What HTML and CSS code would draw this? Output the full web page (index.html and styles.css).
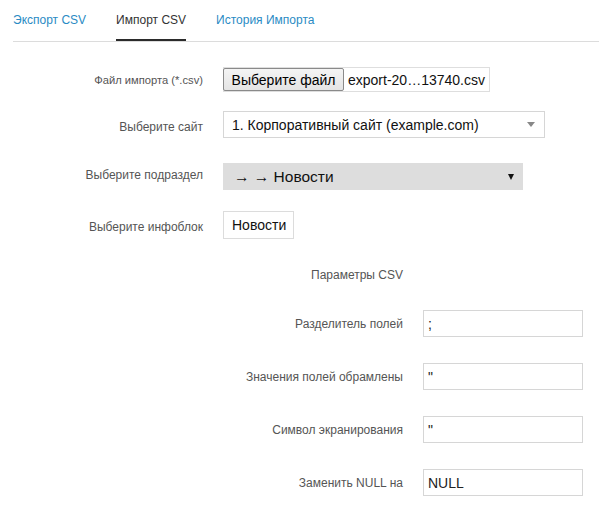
FILE: index.html
```html
<!DOCTYPE html>
<html lang="ru">
<head>
<meta charset="utf-8">
<title>Импорт CSV</title>
<link rel="stylesheet" href="styles.css">
</head>
<body>
<nav class="tabs">
  <a class="tab" href="#">Экспорт CSV</a>
  <a class="tab active" href="#">Импорт CSV</a>
  <a class="tab" href="#">История Импорта</a>
</nav>

<section class="main-form">
  <div class="row row-file">
    <label class="label label-file">Файл импорта (*.csv)</label>
    <div class="file-box">
      <span class="file-btn">Выберите файл</span>
      <span class="file-name">export-20…13740.csv</span>
    </div>
  </div>

  <div class="row row-site">
    <label class="label">Выберите сайт</label>
    <div class="select-site">
      <span>1. Корпоративный сайт (example.com)</span>
      <span class="caret-grey"></span>
    </div>
  </div>

  <div class="row row-section">
    <label class="label">Выберите подраздел</label>
    <div class="select-grey">
      <span>→ → Новости</span>
      <span class="caret-black"></span>
    </div>
  </div>

  <div class="row row-block">
    <label class="label">Выберите инфоблок</label>
    <div class="block-box">Новости</div>
  </div>
</section>

<section class="params">
  <div class="params-title">Параметры CSV</div>
  <div class="prow">
    <label class="label">Разделитель полей</label>
    <div class="text-input">;</div>
  </div>
  <div class="prow">
    <label class="label">Значения полей обрамлены</label>
    <div class="text-input">"</div>
  </div>
  <div class="prow">
    <label class="label">Символ экранирования</label>
    <div class="text-input">"</div>
  </div>
  <div class="prow">
    <label class="label">Заменить NULL на</label>
    <div class="text-input">NULL</div>
  </div>
</section>
</body>
</html>
```

FILE: styles.css
```css
html, body {
  margin: 0;
  padding: 0;
  background: #fff;
  font-family: "Liberation Sans", Arial, sans-serif;
}

.tabs {
  display: flex;
  gap: 30px;
  margin-left: 13px;
  padding-top: 12px;
  border-bottom: 1px solid #dcdcdc;
}

.tab {
  font-size: 12px;
  line-height: 16px;
  padding-bottom: 11px;
  border-bottom: 2px solid transparent;
  color: #2a8bc4;
  text-decoration: none;
}

.tab.active {
  color: #333;
  border-bottom-color: #2b2b2b;
}

.main-form {
  display: flex;
  flex-direction: column;
}

.row {
  display: grid;
  grid-template-columns: 203px auto;
  column-gap: 20px;
  align-items: center;
  justify-items: start;
}

.label {
  justify-self: end;
  font-size: 12px;
  color: #555;
}

.label-file {
  font-size: 11.2px;
}

.row-file { margin-top: 25px; }
.row-site { margin-top: 19px; }
.row-section { margin-top: 25px; }
.row-block { margin-top: 21px; }

.row-site .label { margin-top: 5px; }
.row-section .label { margin-top: -3px; }
.row-block .label { margin-top: 4px; }

.file-box {
  display: flex;
  align-items: center;
  width: 267px;
  height: 25px;
  box-sizing: border-box;
  border: 1px solid #dedede;
  font-size: 14px;
  color: #111;
}

.file-btn {
  box-sizing: border-box;
  height: 23px;
  width: 121px;
  margin-left: -1px;
  display: flex;
  align-items: center;
  justify-content: center;
  background: linear-gradient(#f4f4f4, #e4e4e4);
  border: 1px solid #8a8a8a;
  border-radius: 2px;
  color: #000;
}

.file-name {
  margin-left: 4px;
  white-space: nowrap;
}

.select-site {
  box-sizing: border-box;
  width: 322px;
  height: 27px;
  border: 1px solid #d6d6d6;
  display: flex;
  align-items: center;
  justify-content: space-between;
  padding: 0 9px 0 8px;
  font-size: 14px;
  color: #111;
}

.caret-grey {
  width: 0;
  height: 0;
  border-left: 4px solid transparent;
  border-right: 4px solid transparent;
  border-top: 5px solid #888;
}

.select-grey {
  box-sizing: border-box;
  width: 300px;
  height: 27px;
  background: #dddddd;
  display: flex;
  align-items: center;
  justify-content: space-between;
  padding: 0 9px 0 11px;
  font-size: 15.5px;
  color: #111;
}

.caret-black {
  width: 0;
  height: 0;
  border-left: 3px solid transparent;
  border-right: 3px solid transparent;
  border-top: 6px solid #111;
}

.block-box {
  box-sizing: border-box;
  width: 71px;
  height: 28px;
  border: 1px solid #dcdcdc;
  display: flex;
  align-items: center;
  padding-left: 8px;
  font-size: 14px;
  color: #111;
  white-space: nowrap;
  overflow: hidden;
}

.params {
  display: flex;
  flex-direction: column;
}

.params-title {
  width: 403px;
  text-align: right;
  margin-top: 29px;
  font-size: 12px;
  color: #555;
  line-height: 15px;
}

.prow {
  display: grid;
  grid-template-columns: 403px auto;
  column-gap: 20px;
  align-items: center;
  justify-items: start;
  margin-top: 26px;
}

.params-title + .prow { margin-top: 27px; }

.text-input {
  box-sizing: border-box;
  width: 160px;
  height: 27px;
  border: 1px solid #d6d6d6;
  display: flex;
  align-items: center;
  padding-left: 4px;
  font-size: 14px;
  color: #222;
}
```
